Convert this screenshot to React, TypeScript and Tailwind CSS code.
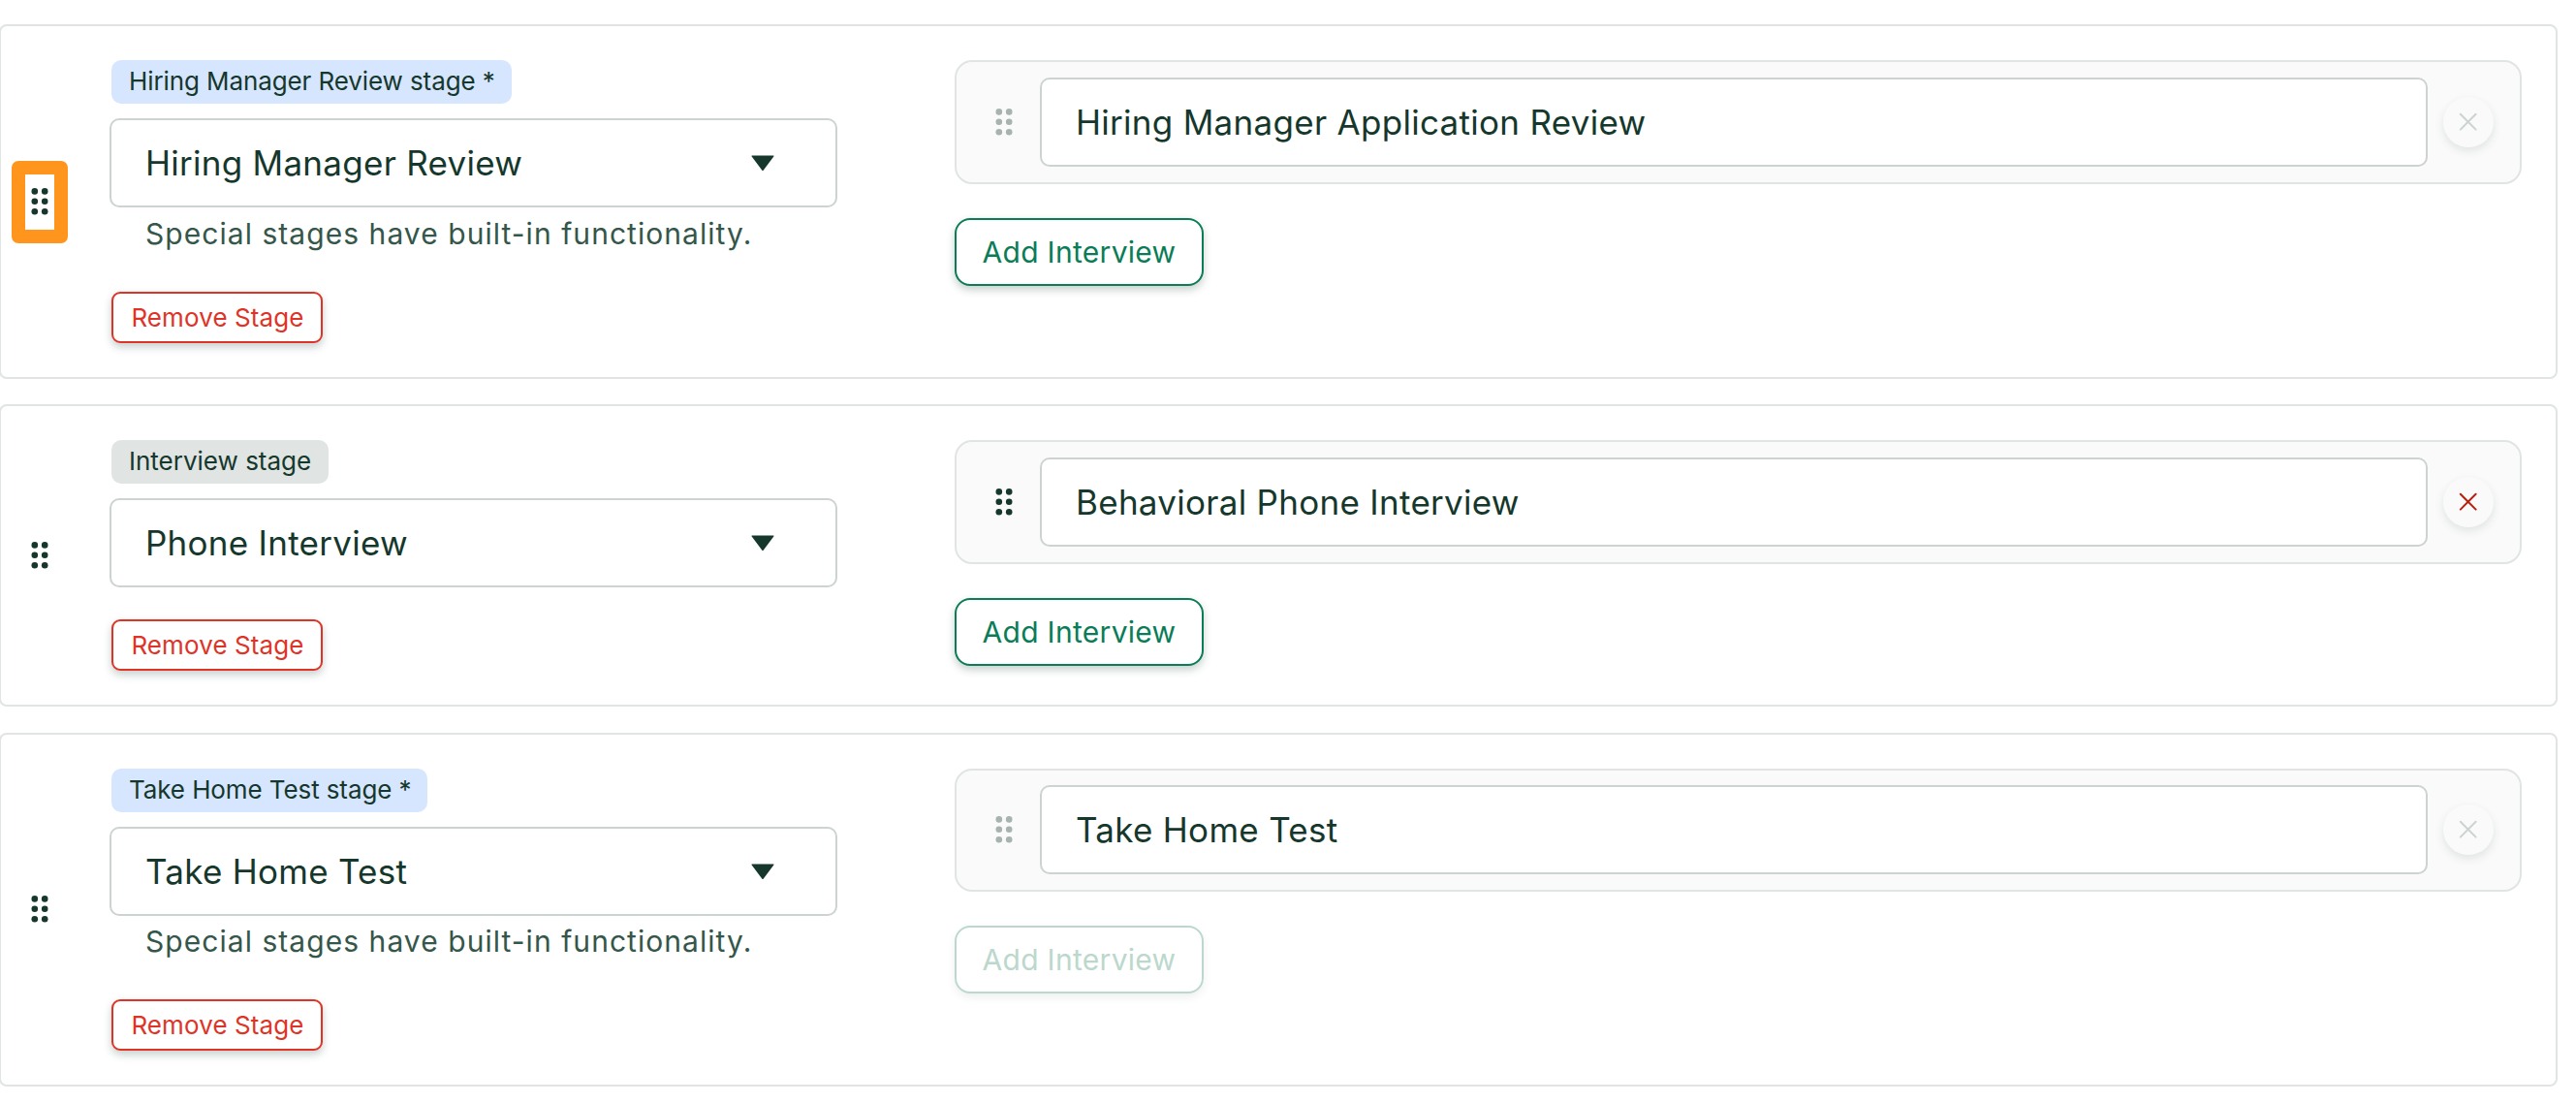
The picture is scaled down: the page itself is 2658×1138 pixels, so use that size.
type Stage = {
  badge: string;
  special: boolean;
  name: string;
  interview: string;
  highlighted?: boolean;
  locked: boolean;
  canAdd: boolean;
  compact?: boolean;
};

const stages: Stage[] = [
  {
    badge: "Hiring Manager Review stage *",
    special: true,
    name: "Hiring Manager Review",
    interview: "Hiring Manager Application Review",
    highlighted: true,
    locked: true,
    canAdd: true,
  },
  {
    badge: "Interview stage",
    special: false,
    name: "Phone Interview",
    interview: "Behavioral Phone Interview",
    locked: false,
    canAdd: true,
  },
  {
    badge: "Take Home Test stage *",
    special: true,
    name: "Take Home Test",
    interview: "Take Home Test",
    locked: true,
    canAdd: false,
    compact: true,
  },
];

function Grip({ muted = false }: { muted?: boolean }) {
  return (
    <svg
      width="18"
      height="28"
      viewBox="0 0 18 28"
      className={muted ? "fill-[#a7b3ae]" : "fill-[#15372c]"}
    >
      {[3.4, 13.8, 24.2].map((y) =>
        [3.8, 14.2].map((x) => <circle key={`${x}-${y}`} cx={x} cy={y} r="3.3" />)
      )}
    </svg>
  );
}

function StageSelect({ value }: { value: string }) {
  return (
    <div className="flex h-[92px] w-[751px] items-center justify-between rounded-[10px] border-2 border-[#ccd3d0] bg-white pr-[63px] pl-[35px]">
      <span className="text-[35px] leading-[44px] tracking-[0.27px]">{value}</span>
      <svg width="24" height="16" viewBox="0 0 24 16" className="fill-[#15372c]">
        <path d="M1.1 0.5H22.9Q24 0.5 23.3 1.5L12.8 15.4Q12 16.4 11.2 15.4L0.7 1.5Q0 0.5 1.1 0.5Z" />
      </svg>
    </div>
  );
}

function InterviewRow({ stage }: { stage: Stage }) {
  return (
    <div
      className={`flex items-start rounded-[18px] border-2 border-[#e0e5e3] bg-[#fafafa] pb-4 ${
        stage.compact ? "pt-[15px]" : "pt-4"
      }`}
    >
      <div className="flex h-[92px] w-[86px] items-center pl-10">
        <Grip muted={stage.locked} />
      </div>
      <div className="flex h-[92px] w-[1432px] items-center rounded-[10px] border-2 border-[#ccd3d0] bg-white pl-[35px] text-[35px] leading-[44px] tracking-[0.29px]">
        {stage.interview}
      </div>
      <button className="mt-5 ml-4 flex size-[52px] items-center justify-center rounded-full bg-[#fafafa] shadow-[0_4px_10px_rgba(21,55,44,0.11)]">
        <svg
          width="20"
          height="20"
          viewBox="0 0 20 20"
          fill="none"
          strokeWidth="2"
          strokeLinecap="round"
          className={stage.locked ? "stroke-[#ccd3d0]" : "stroke-[#b8200e]"}
        >
          <path d="M1.8 1.8L17.6 17.6M17.6 1.8L1.8 17.6" />
        </svg>
      </button>
    </div>
  );
}

function StageCard({ stage }: { stage: Stage }) {
  return (
    <section className="-ml-px flex w-[2640px] rounded-lg border-2 border-[#e0e5e3] bg-white pr-[35px]">
      <div className={`flex w-28 shrink-0 items-center pl-[11px] ${stage.compact ? "pb-0.5" : ""}`}>
        <div
          className={`flex h-[85px] w-[58px] items-center justify-center rounded-[7px] border-[14px] ${
            stage.highlighted ? "border-[#ff951c]" : "border-transparent"
          }`}
        >
          <Grip />
        </div>
      </div>

      <div className="flex w-[751px] shrink-0 flex-col items-start py-[35px]">
        <span
          className={`mb-[15px] ml-0.5 flex h-[45px] items-center rounded-[10px] pb-[2px] pl-[18px] text-[26px] leading-8 ${
            stage.special
              ? "bg-[#d7e6ff] pr-[17px] tracking-[-0.1px]"
              : "bg-[#e0e4e2] pr-[18px] tracking-[0px]"
          }`}
        >
          {stage.badge}
        </span>
        <StageSelect value={stage.name} />
        {stage.special && (
          <p
            className={`pl-[37px] text-[30px] leading-[44px] tracking-[1.05px] whitespace-nowrap text-[#35564a] ${
              stage.compact ? "h-[53px] pt-1" : "h-[54px] pt-[5px]"
            }`}
          >
            Special stages have built-in functionality.
          </p>
        )}
        <button className="mt-[33px] ml-0.5 h-[53px] w-[218px] rounded-[9px] border-2 border-[#de3428] bg-white pl-px text-[26px] leading-8 tracking-[0.1px] text-[#de3428] shadow-[0_4px_8px_rgba(21,55,44,0.24)]">
          Remove Stage
        </button>
      </div>

      <div className="ml-[121px] flex grow flex-col items-start gap-[35px] pt-[35px]">
        <div className="w-full">
          <InterviewRow stage={stage} />
        </div>
        <button
          className={`h-[70px] w-[257px] rounded-[16px] border-2 bg-white text-[30px] leading-10 tracking-[0.3px] ${
            stage.canAdd
              ? "border-[#0a7c57] text-[#0a7c57] shadow-[0_4px_8px_rgba(21,55,44,0.24)]"
              : "border-[#bcd8cd] text-[#bcd8cd] shadow-[0_4px_8px_rgba(21,55,44,0.08)]"
          }`}
        >
          Add Interview
        </button>
      </div>
    </section>
  );
}

export default function App() {
  return (
    <main className="flex h-[1138px] w-[2658px] flex-col gap-[26px] overflow-hidden bg-white pt-[25px] font-['Inter',sans-serif] text-[#15372c]">
      {stages.map((stage) => (
        <div key={stage.name} className={stage.compact ? "pt-px" : ""}>
          <StageCard stage={stage} />
        </div>
      ))}
    </main>
  );
}
